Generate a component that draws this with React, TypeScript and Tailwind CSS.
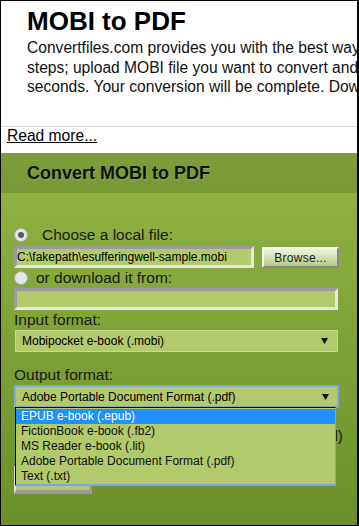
const outputFormats = [
  "EPUB e-book (.epub)",
  "FictionBook e-book (.fb2)",
  "MS Reader e-book (.lit)",
  "Adobe Portable Document Format (.pdf)",
  "Text (.txt)",
];

function Radio({ checked }: { checked?: boolean }) {
  return (
    <span className="w-[14px] h-[14px] shrink-0 rounded-full border border-[#a9a9a9] bg-[#e6e6e6] flex items-center justify-center">
      {checked && <span className="w-[6px] h-[6px] rounded-full bg-[#5a5a5a]" />}
    </span>
  );
}

function Arrow() {
  return (
    <svg width="7" height="6" viewBox="0 0 7 6" className="shrink-0">
      <path d="M0 0h7L3.5 6z" fill="#111" />
    </svg>
  );
}

export default function App() {
  return (
    <div className="w-[359px] h-[526px] overflow-hidden border-l border-t border-b border-r-2 border-black bg-white text-black font-['Liberation_Sans',Arial,sans-serif] flex flex-col">
      {/* intro */}
      <div className="h-[126px] shrink-0 border-b border-[#dcdcdc] pl-[26px] overflow-hidden">
        <h1 className="mt-[5px] text-[26px] leading-[30px] font-bold">MOBI to PDF</h1>
        <div className="mt-[2px] text-[15.6px] leading-[19.5px] whitespace-nowrap text-[#111]">
          <div>Convertfiles.com provides you with the best way to convert MOBI to PDF in three easy</div>
          <div>steps; upload MOBI file you want to convert and choose the output format within</div>
          <div>seconds. Your conversion will be complete. Download your converted file.</div>
        </div>
      </div>
      <div className="h-[26px] shrink-0 pl-[6px] text-[15.6px] leading-[18px]">
        <a href="#" className="underline">Read more...</a>
      </div>

      {/* converter */}
      <div className="flex-1 flex flex-col">
        <div className="h-[40px] shrink-0 pl-[26px] flex items-center bg-gradient-to-b from-[#7e9e3b] to-[#789936] text-[18px] font-bold text-[#111] [text-shadow:1px_1px_0_rgba(255,255,255,0.15)]">
          Convert MOBI to PDF
        </div>

        <div className="flex-1 bg-gradient-to-b from-[#8fb142] to-[#6b8f2a] pl-[13px] pt-[33px] text-[15.5px] text-[#1a1a1a]">
          <div className="h-[18px] flex items-center">
            <Radio checked />
            <span className="ml-[14px] leading-[18px]">Choose a local file:</span>
          </div>

          <div className="mt-[2px] flex gap-[8px]">
            <div className="w-[240px] h-[22px] border-[3px] border-t-[#9b9b9b] border-l-[#9b9b9b] border-r-[#e6e6e6] border-b-[#e6e6e6] bg-[#b2c96c] flex items-center text-[12px] text-black whitespace-nowrap overflow-hidden">
              C:\fakepath\esufferingwell-sample.mobi
            </div>
            <button className="mt-[1px] w-[77px] h-[21px] border-2 border-t-[#f2f2f2] border-l-[#f2f2f2] border-r-[#8a8a8a] border-b-[#8a8a8a] bg-gradient-to-b from-[#eef3dc] to-[#b8cc80] text-[12px] tracking-[0.3px] text-[#222] flex items-center justify-center">
              Browse...
            </button>
          </div>

          <div className="mt-[1px] h-[18px] flex items-center">
            <Radio />
            <span className="ml-[8px] leading-[18px]">or download it from:</span>
          </div>

          <div className="mt-[1px] w-[324px] h-[22px] border-[3px] border-t-[#9b9b9b] border-l-[#9b9b9b] border-r-[#e6e6e6] border-b-[#e6e6e6] bg-[#b2c96c]" />

          <div className="mt-[1px] h-[18px] leading-[18px]">Input format:</div>
          <div className="mt-[1px] ml-[1px] w-[323px] h-[22px] border border-[#c9d99b] bg-[#b2c96c] pl-[6px] pr-[9px] flex items-center justify-between text-[12px] text-black">
            <span>Mobipocket e-book (.mobi)</span>
            <Arrow />
          </div>

          <div className="mt-[14px] h-[18px] leading-[18px]">Output format:</div>
          <div className="relative mt-[1px] w-[325px] h-[23px]">
            <div className="h-full border-2 border-[#7ea7e3] bg-[#b2c96c] pl-[6px] pr-[8px] flex items-center justify-between text-[12px] text-black">
              <span>Adobe Portable Document Format (.pdf)</span>
              <Arrow />
            </div>
            <ul className="absolute top-[22px] left-[1px] z-10 w-[321px] border-t border-l border-black border-r border-r-[#7aa6e6] border-b-2 border-b-[#7aa6e6] bg-[#b2c96c] pt-[1px] text-[12px] leading-[15px]">
              {outputFormats.map((f, i) => (
                <li
                  key={f}
                  className={`h-[15px] pl-[5px] whitespace-nowrap ${i === 0 ? "bg-[#1e90ff] text-white" : "text-[#111]"}`}
                >
                  {f}
                </li>
              ))}
            </ul>
          </div>

          <div className="mt-[19px] w-[329px] h-[18px] leading-[18px] text-right whitespace-nowrap">Email me (optional)</div>

          <button className="mt-[21px] w-[78px] h-[28px] border-l-2 border-t-2 border-l-[#e2e2e2] border-t-[#e2e2e2] border-r-[3px] border-b-4 border-r-[#9a9a9a] border-b-[#9a9a9a] bg-[#b5c970] text-[13px] text-[#222]">
            Convert
          </button>
        </div>
      </div>
    </div>
  );
}
